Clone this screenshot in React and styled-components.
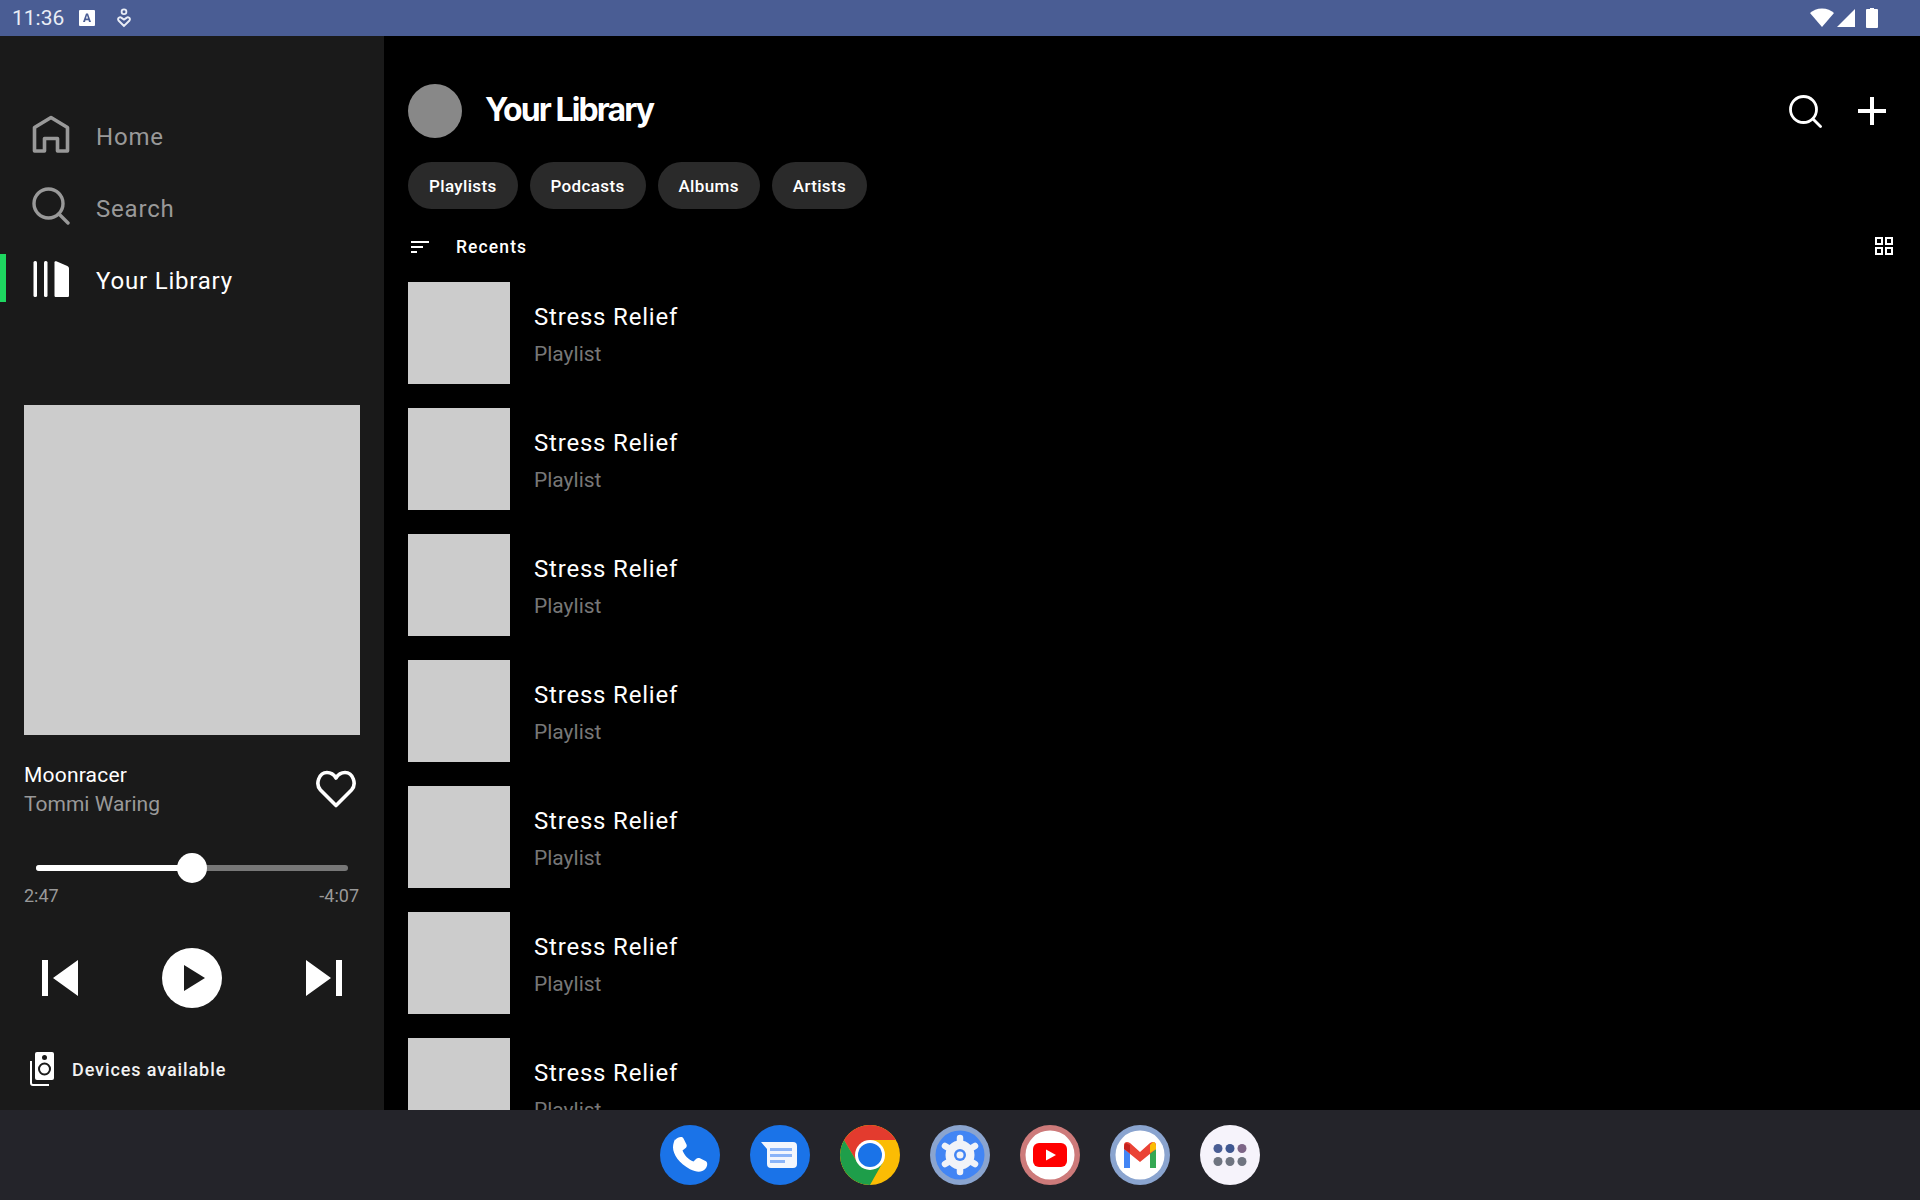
import React from "react";
import styled, { createGlobalStyle } from "styled-components";

const GlobalStyle = createGlobalStyle`
  html, body { margin: 0; padding: 0; background: #000; }
  * { box-sizing: border-box; }
`;

const Screen = styled.div`
  width: 1920px;
  height: 1200px;
  display: flex;
  flex-direction: column;
  overflow: hidden;
  font-family: Roboto, "Liberation Sans", sans-serif;
  color: #fff;
  background: #000;
`;

const StatusBar = styled.div`
  height: 36px;
  flex: none;
  display: flex;
  align-items: center;
  padding: 0 42px 0 12px;
  background: #4a5d94;
  color: #e9edf6;
`;

const Clock = styled.span`
  font-size: 21px;
  width: 66px;
`;

const StatusRight = styled.div`
  margin-left: auto;
  display: flex;
  align-items: center;
  gap: 2px;
`;

const Middle = styled.div`
  flex: 1;
  min-height: 0;
  display: flex;
`;

const Sidebar = styled.aside`
  width: 384px;
  flex: none;
  display: flex;
  flex-direction: column;
  padding-top: 62px;
  background: #1a1a1a;
`;

const NavRow = styled.div`
  position: relative;
  height: 72px;
  display: flex;
  align-items: center;
  padding-left: 32px;
  color: ${(p) => (p.$active ? "#fff" : "#999")};

  &::before {
    content: "";
    display: ${(p) => (p.$active ? "block" : "none")};
    position: absolute;
    left: 0;
    top: 12px;
    width: 6px;
    height: 48px;
    background: #1ed760;
  }
`;

const NavIcon = styled.svg`
  width: 38px;
  height: 38px;
  flex: none;
  margin-top: ${(p) => (p.$active ? "2px" : "0")};
`;

const NavLabel = styled.span`
  margin-left: 26px;
  padding-top: 6px;
  font-size: 24px;
  letter-spacing: 0.8px;
`;

const Player = styled.div`
  margin-top: 91px;
  padding: 0 24px;
  display: flex;
  flex-direction: column;
`;

const Cover = styled.div`
  width: 336px;
  height: 330px;
  background: #cccccc;
`;

const TrackRow = styled.div`
  margin-top: 26px;
  display: flex;
  align-items: center;
  justify-content: space-between;
`;

const TrackTitle = styled.div`
  font-size: 21px;
  line-height: 28px;
  letter-spacing: 0.2px;
  color: #fff;
`;

const TrackArtist = styled.div`
  margin-top: 1px;
  font-size: 21px;
  line-height: 28px;
  color: #999;
`;

const HeartIcon = styled.svg`
  width: 40px;
  height: 38px;
  margin: -2px 4px 0 0;
`;

const SliderTrack = styled.div`
  position: relative;
  margin: 47px 12px 0;
  height: 6px;
  border-radius: 3px;
  background: #777;
`;

const SliderFill = styled.div`
  height: 100%;
  border-radius: 3px;
  background: #fff;
`;

const SliderThumb = styled.div`
  position: absolute;
  top: -12px;
  margin-left: -15px;
  width: 30px;
  height: 30px;
  border-radius: 50%;
  background: #fff;
`;

const TimeRow = styled.div`
  margin-top: 15px;
  padding-right: 1px;
  display: flex;
  justify-content: space-between;
  font-size: 18px;
  line-height: 20px;
  color: #999;
`;

const Controls = styled.div`
  margin-top: 42px;
  padding: 0 18px;
  display: flex;
  align-items: center;
  justify-content: space-between;
`;

const PlayButton = styled.div`
  width: 60px;
  height: 60px;
  border-radius: 50%;
  background: #fff;
  display: flex;
  align-items: center;
  justify-content: center;
`;

const PlayGlyph = styled.svg`
  width: 21px;
  height: 26px;
  margin-left: 5px;
`;

const Devices = styled.div`
  margin-top: 44px;
  padding-left: 6px;
  display: flex;
  align-items: center;
  gap: 18px;
  font-size: 18px;
  font-weight: 500;
  letter-spacing: 0.9px;
  color: #f2f2f2;
`;

const Main = styled.main`
  flex: 1;
  min-width: 0;
  overflow: hidden;
  padding: 48px 24px 0;
  background: #000;
`;

const Header = styled.header`
  display: flex;
  align-items: center;
  height: 54px;
`;

const Avatar = styled.div`
  width: 54px;
  height: 54px;
  border-radius: 50%;
  background: #888;
`;

const Title = styled.h1`
  margin: -4px 0 0 23px;
  font-family: Inter, Roboto, sans-serif;
  font-size: 32px;
  font-weight: 700;
  letter-spacing: -1.9px;
`;

const HeaderActions = styled.div`
  margin-left: auto;
  padding-right: 10px;
  display: flex;
  align-items: center;
  gap: 36px;
`;

const Chips = styled.div`
  margin-top: 24px;
  display: flex;
  gap: 12px;
`;

const Chip = styled.div`
  height: 47px;
  padding: 0 21px;
  border-radius: 24px;
  display: flex;
  align-items: center;
  background: #2a2a2a;
  font-size: 17px;
  font-weight: 500;
  letter-spacing: 0.35px;
`;

const SortRow = styled.div`
  margin-top: 20px;
  height: 35px;
  padding-right: 3px;
  display: flex;
  align-items: center;
  justify-content: space-between;
`;

const SortLabel = styled.span`
  display: flex;
  align-items: center;
  gap: 27px;
  padding-left: 3px;
  font-size: 17.5px;
  font-weight: 500;
  letter-spacing: 1.1px;
`;

const GridGlyph = styled.svg`
  width: 18px;
  height: 18px;
  margin-top: -2px;
`;

const List = styled.div`
  margin-top: 18px;
  display: flex;
  flex-direction: column;
  gap: 24px;
`;

const Item = styled.div`
  display: flex;
  align-items: center;
  gap: 24px;
`;

const Thumb = styled.div`
  width: 102px;
  height: 102px;
  flex: none;
  background: #cccccc;
`;

const ItemText = styled.div`
  padding-top: 5px;
`;

const ItemTitle = styled.div`
  font-size: 24px;
  line-height: 36px;
  letter-spacing: 0.8px;
`;

const ItemSub = styled.div`
  padding-top: 1px;
  font-size: 21px;
  line-height: 36px;
  color: #777;
`;

const Dock = styled.footer`
  height: 90px;
  flex: none;
  display: flex;
  align-items: center;
  justify-content: center;
  gap: 30px;
  background: #24242a;
`;

const DockIcon = styled.div`
  width: 60px;
  height: 60px;
  border-radius: 50%;
  overflow: hidden;
  background: ${(p) => p.$bg || "#1a73e8"};
`;

const DockSvg = styled.svg`
  width: 60px;
  height: 60px;
  display: block;
`;

const items = Array.from({ length: 7 });

const App = () => (
  <Screen>
    <GlobalStyle />
    <StatusBar>
      <Clock>11:36</Clock>
      <svg width="18" height="18" viewBox="0 0 18 18">
        <rect x="1" y="1" width="16" height="16" rx="1" fill="#fff" />
        <path d="M5 13 8 4.5h2L13 13h-2l-.5-1.8h-3L7 13zM8 9.6h2L9 6.3z" fill="#4a5d94" />
      </svg>
      <svg width="16" height="20" viewBox="0 0 16 20" style={{ marginLeft: 20 }}>
        <circle cx="8" cy="3.8" r="2.4" fill="none" stroke="#e9edf6" strokeWidth="1.8" />
        <path d="M8 18 2.5 12.5c-1.6-2 1.5-4.2 3-2.6L8 11.6l2.5-1.7c1.5-1.6 4.6.6 3 2.6z" fill="none" stroke="#e9edf6" strokeWidth="1.9" />
      </svg>
      <StatusRight>
        <svg width="24" height="20" viewBox="0 0 24 20">
          <path d="M12 19 0 5C3 2.500 7 .5 12 .5S21 2.500 24 5z" fill="#fff" />
        </svg>
        <svg width="20" height="20" viewBox="0 0 20 20">
          <path d="M19 1v18H1z" fill="#fff" />
        </svg>
        <svg width="12" height="20" viewBox="0 0 12 20" style={{ marginLeft: 8 }}>
          <path d="M4 0h4v1h3a1 1 0 0 1 1 1v17a1 1 0 0 1-1 1H1a1 1 0 0 1-1-1V2a1 1 0 0 1 1-1h3z" fill="#fff" />
        </svg>
      </StatusRight>
    </StatusBar>

    <Middle>
      <Sidebar>
        <NavRow>
          <NavIcon viewBox="0 0 38 38">
            <path d="M2.500 36V12.500L19 2.500l16.500 10V36H25.500V23.500h-13V36z" fill="none" stroke="#999" strokeWidth="3.6" strokeLinejoin="round" />
          </NavIcon>
          <NavLabel>Home</NavLabel>
        </NavRow>
        <NavRow>
          <NavIcon viewBox="0 0 38 38">
            <circle cx="16.500" cy="16.500" r="14.500" fill="none" stroke="#999" strokeWidth="3.400" />
            <path d="M27 27l9 9" stroke="#999" strokeWidth="3.400" strokeLinecap="round" />
          </NavIcon>
          <NavLabel>Search</NavLabel>
        </NavRow>
        <NavRow $active>
          <NavIcon $active viewBox="0 0 38 38">
            <rect x="1.500" y="1" width="3.500" height="36" rx="1.500" fill="#fff" />
            <rect x="12" y="1" width="3.500" height="36" rx="1.500" fill="#fff" />
            <path d="M22.500 2.500c0-1 .7-1.600 1.800-1.200l11 4.700c1 .5 1.700 1.500 1.700 2.600V35.500c0 1-.6 1.500-1.500 1.500H24c-1 0-1.500-.5-1.500-1.500z" fill="#fff" />
          </NavIcon>
          <NavLabel>Your Library</NavLabel>
        </NavRow>

        <Player>
          <Cover />
          <TrackRow>
            <div>
              <TrackTitle>Moonracer</TrackTitle>
              <TrackArtist>Tommi Waring</TrackArtist>
            </div>
            <HeartIcon viewBox="0 0 40 38">
              <path d="M20 35.500 4.500 20C-1 14 3 2.500 11 2.500c4 0 7 2.200 9 5.500 2-3.300 5-5.500 9-5.500 8 0 12 11.500 6.500 17.500z" fill="none" stroke="#fff" strokeWidth="3.600" strokeLinejoin="round" />
            </HeartIcon>
          </TrackRow>
          <SliderTrack>
            <SliderFill style={{ width: "50%" }} />
            <SliderThumb style={{ left: "50%" }} />
          </SliderTrack>
          <TimeRow>
            <span>2:47</span>
            <span>-4:07</span>
          </TimeRow>
          <Controls>
            <svg width="36" height="36" viewBox="0 0 36 36">
              <path d="M0 0h6v36H0zM36 0v36L11 18z" fill="#fff" />
            </svg>
            <PlayButton>
              <PlayGlyph viewBox="0 0 21 26">
                <path d="M0 0 21 13 0 26z" fill="#1a1a1a" />
              </PlayGlyph>
            </PlayButton>
            <svg width="36" height="36" viewBox="0 0 36 36">
              <path d="M0 0 25 18 0 36zM30 0h6v36h-6z" fill="#fff" />
            </svg>
          </Controls>
          <Devices>
            <svg width="24" height="34" viewBox="0 0 24 34">
              <path d="M1 9v22a2 2 0 0 0 2 2h16" fill="none" stroke="#fff" strokeWidth="2" />
              <path d="M7 0h15a2 2 0 0 1 2 2v24a2 2 0 0 1-2 2H7a2 2 0 0 1-2-2V2a2 2 0 0 1 2-2z" fill="#fff" />
              <circle cx="14.500" cy="5.500" r="2.500" fill="#1a1a1a" />
              <circle cx="14.500" cy="17" r="5.500" fill="none" stroke="#1a1a1a" strokeWidth="2" />
            </svg>
            Devices available
          </Devices>
        </Player>
      </Sidebar>

      <Main>
        <Header>
          <Avatar />
          <Title>Your Library</Title>
          <HeaderActions>
            <svg width="33" height="33" viewBox="0 0 33 33">
              <circle cx="14.500" cy="14.500" r="13" fill="none" stroke="#fff" strokeWidth="2.800" />
              <path d="M24 24l7.500 7.500" stroke="#fff" strokeWidth="2.800" strokeLinecap="round" />
            </svg>
            <svg width="28" height="28" viewBox="0 0 28 28">
              <path d="M12 0h4v12h12v4H16v12h-4V16H0v-4h12z" fill="#fff" />
            </svg>
          </HeaderActions>
        </Header>

        <Chips>
          <Chip>Playlists</Chip>
          <Chip>Podcasts</Chip>
          <Chip>Albums</Chip>
          <Chip>Artists</Chip>
        </Chips>

        <SortRow>
          <SortLabel>
            <svg width="18" height="12" viewBox="0 0 18 12">
              <path d="M0 0h18v2H0zM0 5h12v2H0zM0 10h6v2H0z" fill="#fff" />
            </svg>
            Recents
          </SortLabel>
          <GridGlyph viewBox="0 0 18 18">
            <path d="M1 1h6v6H1zM11 1h6v6h-6zM1 11h6v6H1zM11 11h6v6h-6z" fill="none" stroke="#fff" strokeWidth="2" />
          </GridGlyph>
        </SortRow>

        <List>
          {items.map((_, i) => (
            <Item key={i}>
              <Thumb />
              <ItemText>
                <ItemTitle>Stress Relief</ItemTitle>
                <ItemSub>Playlist</ItemSub>
              </ItemText>
            </Item>
          ))}
        </List>
      </Main>
    </Middle>

    <Dock>
      <DockIcon>
        <DockSvg viewBox="0 0 60 60">
          <path d="M15 15c3-3 7-4 8.500-1.500l3 6c.7 1.500 0 3-1.500 4l-2.500 2c2 5 6 9 11 11l2.500-2.500c1-1 2.500-1.500 4-.7l6 3c2 1.500 1.500 5.700-1 8-3 3-8 3.500-15 0-11-6-17-15-17-22 0-3 1-6 2-8z" fill="#fff" />
        </DockSvg>
      </DockIcon>
      <DockIcon>
        <DockSvg viewBox="0 0 60 60">
          <path d="M11 17h32a4 4 0 0 1 4 4v18a4 4 0 0 1-4 4H21a4 4 0 0 1-4-4V24z" fill="#f2f6fd" />
          <path d="M20 23h22v3H20zM20 29h22v3H20zM20 35h15v3H20z" fill="#8ab4f8" />
        </DockSvg>
      </DockIcon>
      <DockIcon $bg="#fbbc04">
        <DockSvg viewBox="0 0 60 60">
          <path d="M4 15A30 30 0 0 1 56 15H30L17 37z" fill="#e33b2e" />
          <path d="M4 15 17 37H43L30 60A30 30 0 0 1 4 15z" fill="#1e9e4a" />
          <circle cx="30" cy="30" r="15" fill="#fff" />
          <circle cx="30" cy="30" r="12" fill="#1a73e8" />
        </DockSvg>
      </DockIcon>
      <DockIcon $bg="#8aa4cf">
        <DockSvg viewBox="0 0 60 60">
          <circle cx="30" cy="30" r="24.500" fill="#4285f4" />
          <circle cx="30" cy="30" r="11" fill="none" stroke="#f1f3f8" strokeWidth="7" />
          <path d="M30 30V13M30 30V47M30 30 15 21M30 30 45 39M30 30 15 39M30 30 45 21" stroke="#f1f3f8" strokeWidth="6.500" strokeLinecap="round" />
          <circle cx="30" cy="30" r="8" fill="#f1f3f8" />
          <circle cx="30" cy="30" r="6" fill="#4285f4" />
          <circle cx="30" cy="30" r="3.500" fill="#f1f3f8" />
        </DockSvg>
      </DockIcon>
      <DockIcon $bg="#cd7a7a">
        <DockSvg viewBox="0 0 60 60">
          <circle cx="30" cy="30" r="24.500" fill="#fff" />
          <rect x="13" y="18" width="34" height="24" rx="6" fill="#f00" />
          <path d="M26 24.500 36 30l-10 5.500z" fill="#fff" />
        </DockSvg>
      </DockIcon>
      <DockIcon $bg="#8aa4cf">
        <DockSvg viewBox="0 0 60 60">
          <circle cx="30" cy="30" r="24.500" fill="#fff" />
          <path d="M14 24v19h6V28z" fill="#4285f4" />
          <path d="M40 28v15h6V24z" fill="#34a853" />
          <path d="M14 24l16 13 16-13v-4c0-3-3-4-6-2L30 27 20 18c-3-2-6-1-6 2z" fill="#ea4335" />
          <path d="M14 24c0-1 0-5 2-6l4 2v8z" fill="#c5221f" />
          <path d="M40 20l3-3c2 0 3 2 3 4v3l-6 4z" fill="#fbbc04" />
        </DockSvg>
      </DockIcon>
      <DockIcon $bg="#f6f3fb">
        <DockSvg viewBox="0 0 60 60">
          <circle cx="18" cy="23.500" r="4.500" fill="#4a5d94" />
          <circle cx="30" cy="23.500" r="4.500" fill="#3f5791" />
          <circle cx="42" cy="23.500" r="4.500" fill="#7d6587" />
          <circle cx="18" cy="36.500" r="4.500" fill="#6f7480" />
          <circle cx="30" cy="36.500" r="4.500" fill="#6f7480" />
          <circle cx="42" cy="36.500" r="4.500" fill="#6f7480" />
        </DockSvg>
      </DockIcon>
    </Dock>
  </Screen>
);

export default App;
